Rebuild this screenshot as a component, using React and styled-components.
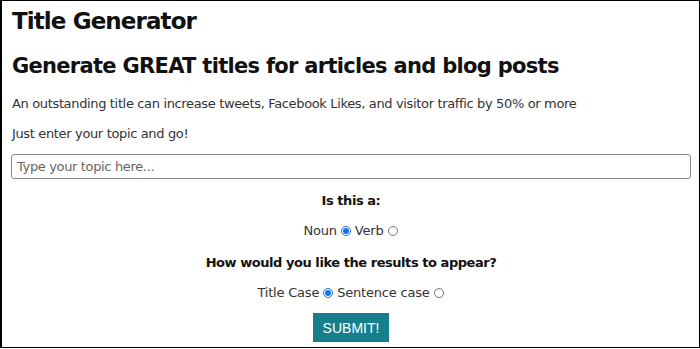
import React from 'react';
import styled, { createGlobalStyle } from 'styled-components';

const GlobalStyle = createGlobalStyle`
  html, body { margin: 0; padding: 0; background: #fff; }
  body { font-family: "DejaVu Sans", Verdana, sans-serif; color: #222; }
`;

const Frame = styled.div`
  box-sizing: border-box;
  width: 700px;
  height: 348px;
  border: 1px solid #000;
  border-left-width: 2px;
  padding: 5px 9px 0 10px;
  overflow: hidden;
`;

const Title = styled.h1`
  font-family: "DejaVu Sans", sans-serif;
  font-weight: bold;
  font-size: 23px;
  letter-spacing: -0.9px;
  line-height: 30px;
  margin: 0;
  color: #111;
`;

const Subtitle = styled.h2`
  font-family: "DejaVu Sans", sans-serif;
  font-weight: bold;
  font-size: 21px;
  letter-spacing: -0.7px;
  line-height: 28px;
  margin: 16px 0 0;
  color: #111;
`;

const Text = styled.p`
  font-size: 13px;
  line-height: 16px;
  margin: ${p => p.$top || 0}px 0 0;
  text-align: ${p => (p.$center ? 'center' : 'left')};
  font-weight: ${p => (p.$bold ? 'bold' : 'normal')};
  letter-spacing: ${p => (p.$bold ? '-0.45px' : '-0.35px')};
  color: ${p => (p.$bold ? '#111' : '#333')};
`;

const TopicInput = styled.input`
  display: block;
  box-sizing: border-box;
  width: 680px;
  height: 25px;
  margin: 12px 0 0 -1px;
  padding: 0 5px;
  border: 1px solid #8a8a8a;
  border-radius: 3px;
  font-family: "DejaVu Sans", sans-serif;
  font-size: 13px;
  letter-spacing: -0.35px;
  color: #333;
  &::placeholder { color: #666; }
`;

const Options = styled.div`
  display: flex;
  justify-content: center;
  align-items: center;
  gap: 3px;
  margin-top: ${p => p.$top}px;
  font-size: 13px;
  line-height: 16px;
  letter-spacing: -0.2px;
  color: #333;
`;

const Radio = styled.input.attrs({ type: 'radio' })`
  width: 10px;
  height: 10px;
  margin: 0 1px;
  accent-color: #1a73e8;
`;

const Submit = styled.button`
  display: block;
  margin: 12px auto 0;
  width: 76px;
  height: 29px;
  border: none;
  background: #15808c;
  color: #fff;
  font-family: "Liberation Sans", Arial, sans-serif;
  font-size: 14px;
  padding: 0;
`;

export default function App() {
  return (
    <>
      <GlobalStyle />
      <Frame>
        <Title>Title Generator</Title>
        <Subtitle>Generate GREAT titles for articles and blog posts</Subtitle>
        <Text $top={16}>An outstanding title can increase tweets, Facebook Likes, and visitor traffic by 50% or more</Text>
        <Text $top={14}>Just enter your topic and go!</Text>
        <TopicInput placeholder="Type your topic here..." />
        <Text $top={14} $center $bold>Is this a:</Text>
        <Options $top={14}>
          Noun <Radio name="pos" defaultChecked /> Verb <Radio name="pos" />
        </Options>
        <Text $top={16} $center $bold>How would you like the results to appear?</Text>
        <Options $top={14}>
          Title Case <Radio name="case" defaultChecked /> Sentence case <Radio name="case" />
        </Options>
        <Submit>SUBMIT!</Submit>
      </Frame>
    </>
  );
}
